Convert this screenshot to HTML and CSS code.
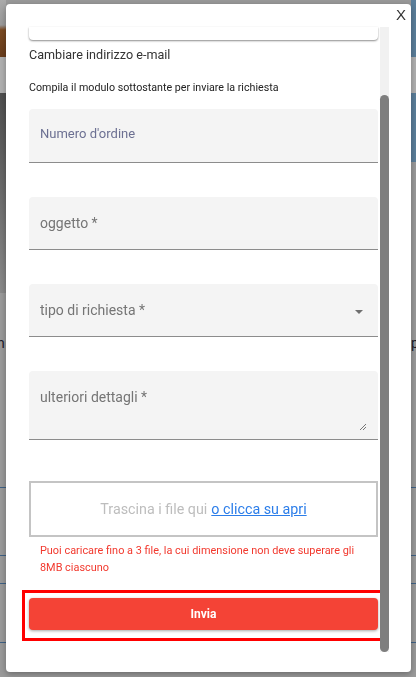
FILE: index.html
```html
<!DOCTYPE html>
<html lang="it">
<head>
    <meta charset="UTF-8">
    <meta name="viewport" content="width=device-width, initial-scale=1.0">
    <title>Cambiare indirizzo e-mail</title>
    <link rel="stylesheet" href="styles.css">
</head>
<body>
    <!-- page behind the dialog, dimmed -->
    <div class="backdrop">
        <div class="side side-left">
            <div class="band photo"></div>
            <div class="band light"></div>
            <div class="band dark"></div>
            <div class="band grey grow">
                <span class="peek">n</span>
            </div>
        </div>
        <div class="middle"></div>
        <div class="side side-right">
            <div class="band blue"></div>
            <div class="band light"></div>
            <div class="band blue tall"></div>
            <div class="band grey grow">
                <span class="peek">p</span>
            </div>
        </div>
    </div>

    <div class="modal">
        <div class="modal-head">
            <button class="close">X</button>
        </div>
        <div class="modal-body">
            <div class="content">
                <div class="card-stub"></div>
                <h2 class="title">Cambiare indirizzo e-mail</h2>
                <p class="intro">Compila il modulo sottostante per inviare la richiesta</p>

                <div class="field first">
                    <span class="label label-order">Numero d'ordine</span>
                </div>
                <div class="field">
                    <span class="label">oggetto *</span>
                </div>
                <div class="field select">
                    <span class="label">tipo di richiesta *</span>
                    <span class="caret"></span>
                </div>
                <div class="field area">
                    <span class="label">ulteriori dettagli *</span>
                    <svg class="grip" width="8" height="8" viewBox="0 0 8 8">
                        <path d="M1 7 L7 1 M4 7 L7 4" stroke="#555" stroke-width="0.8" fill="none"/>
                    </svg>
                </div>

                <div class="dropzone">
                    Trascina i file qui <a href="#">o clicca su apri</a>
                </div>
                <p class="hint">Puoi caricare fino a 3 file, la cui dimensione non deve superare gli 8MB ciascuno</p>

                <div class="submit-wrap">
                    <button class="submit">Invia</button>
                </div>
            </div>
            <div class="scrollbar">
                <div class="thumb"></div>
            </div>
        </div>
    </div>
</body>
</html>
```
FILE: styles.css
```css
html, body {
    margin: 0;
    padding: 0;
    height: 100%;
}
body {
    font-family: Roboto, Arial, sans-serif;
    background-color: #999;
    overflow: hidden;
}
.backdrop {
    display: flex;
    flex-direction: row;
    height: 677px;
}
.side {
    display: flex;
    flex-direction: column;
}
.side-left {
    width: 6px;
}
.side-right {
    width: 5px;
}
.middle {
    flex: 1;
}
.band {
    height: 36px;
}
.photo {
    height: 57px;
    background: linear-gradient(#aaa 0, #9a9a9a 25px, #7b4a22 30px, #6a3d1c 55px);
}
.light {
    background-color: #b0b0b0;
}
.dark {
    height: 200px;
    background: linear-gradient(#4e4e4e, #8a8a8a);
}
.blue {
    height: 57px;
    background-color: #5b7e9a;
}
.tall {
    height: 69px;
}
.grey {
    background-color: #9a9a9a;
    background-image:
        linear-gradient(#3f6185, #3f6185),
        linear-gradient(#3f6185, #3f6185),
        linear-gradient(#3f6185, #3f6185),
        linear-gradient(#3f6185, #3f6185);
    background-size: 100% 1px;
    background-repeat: no-repeat;
}
.grow {
    flex: 1;
    position: relative;
}
.side-left .grey {
    background-position: 0 194px, 0 262px, 0 290px, 0 349px;
}
.side-right .grey {
    background-position: 0 325px, 0 393px, 0 421px, 0 480px;
}
.peek {
    position: absolute;
    top: 42px;
    font-size: 14px;
    color: #1a1a2a;
}
.side-left .peek {
    left: -3px;
}
.side-right .peek {
    top: 173px;
    left: 0;
}

.modal {
    position: fixed;
    top: 4px;
    left: 6px;
    width: 405px;
    height: 668px;
    background-color: #fff;
    border-radius: 4px;
    box-shadow: 0 2px 6px rgba(0, 0, 0, 0.3);
    display: flex;
    flex-direction: column;
}
.modal-head {
    height: 23px;
    display: flex;
    justify-content: flex-end;
    align-items: flex-start;
}
.close {
    font-family: Arial, sans-serif;
    font-size: 15px;
    color: #333;
    background: none;
    border: none;
    padding: 3px 5px 0 0;
    line-height: 16px;
    cursor: pointer;
}
.modal-body {
    height: 625px;
    display: flex;
    flex-direction: row;
    padding-left: 23px;
    gap: 2px;
}
.content {
    width: 349px;
    display: flex;
    flex-direction: column;
}
.card-stub {
    height: 13px;
    flex-shrink: 0;
    border-radius: 0 0 4px 4px;
    box-shadow: 0 1px 2px rgba(0, 0, 0, 0.45);
}
.title {
    margin: 7px 0 0 0;
    font-size: 12.6px;
    font-weight: normal;
    line-height: 16px;
    color: #333;
}
.intro {
    margin: 18px 0 0 0;
    font-size: 10.7px;
    line-height: 13px;
    color: #222;
}
.field {
    flex-shrink: 0;
    background-color: #f4f4f4;
    border-radius: 4px 4px 0 0;
    border-bottom: 1px solid #8c8c8c;
    padding: 18px 11px 0 11px;
    box-sizing: border-box;
    height: 53px;
    margin-top: 34px;
    display: flex;
    justify-content: space-between;
    position: relative;
}
.field.first {
    margin-top: 15px;
    height: 54px;
}
.label {
    font-size: 14px;
    line-height: 17px;
    color: #757575;
}
.label-order {
    font-size: 13px;
    color: #6c7092;
    margin-top: -2px;
}
.select .caret {
    margin-top: 8px;
    margin-right: 4px;
    width: 0;
    height: 0;
    border-left: 4px solid transparent;
    border-right: 4px solid transparent;
    border-top: 4px solid #6f6f6f;
}
.area {
    height: 69px;
}
.grip {
    position: absolute;
    right: 11px;
    bottom: 8px;
}
.dropzone {
    flex-shrink: 0;
    margin-top: 41px;
    height: 56px;
    box-sizing: border-box;
    border: 2px solid #c4c4c4;
    display: flex;
    justify-content: center;
    align-items: center;
    gap: 4px;
    font-size: 14.3px;
    color: #bdbdbd;
}
.dropzone a {
    color: #2b7de9;
}
.hint {
    margin: 5px 0 0 0;
    padding: 0 10px 0 11px;
    font-size: 10.9px;
    line-height: 17px;
    color: #f2392e;
}
.submit-wrap {
    flex-shrink: 0;
    margin: 14px -9px 0 -7px;
    border: 3px solid #ff0000;
    padding: 5px 6px 8px 4px;
}
.submit {
    display: block;
    width: 100%;
    height: 32px;
    background-color: #f44336;
    color: #fff;
    border: none;
    border-radius: 4px;
    font-family: Roboto, Arial, sans-serif;
    font-size: 12px;
    font-weight: bold;
    box-shadow: 0 1px 3px rgba(0, 0, 0, 0.35);
    cursor: pointer;
}
.scrollbar {
    width: 9px;
    background-color: #f1f1f1;
    padding-top: 68px;
    display: flex;
    flex-direction: column;
}
.thumb {
    flex: 1;
    background-color: #7e7e7e;
    border-radius: 5px;
}
```
